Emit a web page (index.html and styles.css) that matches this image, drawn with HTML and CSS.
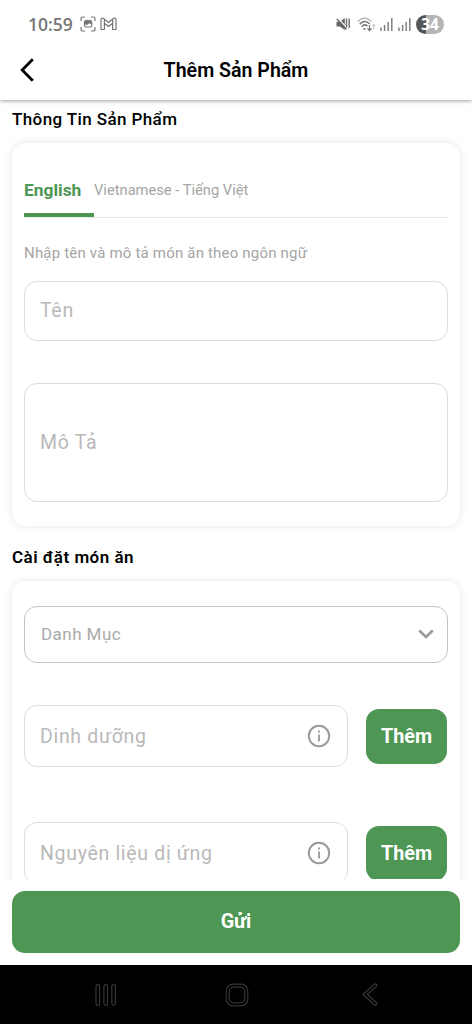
FILE: index.html
```html
<!DOCTYPE html>
<html lang="vi">
<head>
<meta charset="utf-8">
<title>Thêm Sản Phẩm</title>
<link rel="stylesheet" href="styles.css">
</head>
<body>
<div class="screen">
  <header class="header">
    <div class="status">
      <div class="status-left">
        <span class="clock">10:59</span>
        <svg class="ic-capture" width="16" height="16" viewBox="0 0 16 16" fill="none" stroke="#777" stroke-width="1.2" stroke-linecap="round">
          <path d="M1 4.500V3Q1 1 3 1h1.500M11.500 1H13q2 0 2 2v1.500M15 11.500V13q0 2-2 2h-1.500M4.500 15H3q-2 0-2-2v-1.500"/>
          <rect x="4.500" y="4.600" width="7.200" height="6.400" rx="1.500"/>
          <path d="M4.500 8.200V6q0-1.500 1.500-1.500h4.200q1.500 0 1.500 1.500v2.500L9.500 7.200 7 9z" fill="#777" stroke="none"/>
        </svg>
        <svg class="ic-mail" width="17" height="14" viewBox="0 0 17 14" fill="none" stroke="#777" stroke-width="1.2" stroke-linejoin="round">
          <path d="M1 12.500V2.500Q1.300.5 3.300 1.300L8.500 5.500 13.700 1.300Q15.700.5 16 2.500V12.500H12.600V6.300L8.500 9.500 4.400 6.300V12.500Z"/>
          <path d="M4.400 6.300V2.200M12.600 6.300V2.200"/>
        </svg>
      </div>
      <div class="status-right">
        <svg class="ic-mute" width="14" height="14" viewBox="0 0 14 14" fill="none" stroke="#666" stroke-width="1.200">
          <path d="M.5 4.700H4L8.800 1V13L4 9.500H.5Z" fill="#666" stroke="none"/>
          <path d="M2 1.200 11 11" stroke="#fff" stroke-width="1.200"/>
          <path d="M.8 2 10.500 12.500"/>
          <path d="M10 1.500l1 1.500-1 1.500 1 1.500-1 1.500 1 1.500-1 1.500M12.700 1.500l1 1.500-1 1.500 1 1.500-1 1.500 1 1.500-1 2"/>
        </svg>
        <svg class="ic-wifi" width="19" height="15" viewBox="0 0 19 15" fill="none" stroke-width="1.500">
          <path d="M.8 4.500Q7.500-2.200 14.500 4.500" stroke="#bbb"/>
          <path d="M2.600 7.200Q7.500 2 12.800 7" stroke="#777"/>
          <path d="M4.800 9.700Q7.500 6.500 10.500 9" stroke="#777"/>
          <circle cx="7.500" cy="12" r="1.100" fill="#777"/>
          <path d="M12.500 8v5M10.500 11.300l2 2.200 2-2.200" stroke="#777" stroke-width="1.200"/>
          <path d="M16.800 12V7.500M15.300 9l1.500-1.700L18.300 9" stroke="#bbb" stroke-width="1"/>
        </svg>
        <svg class="ic-signal" width="13" height="13" viewBox="0 0 13 13" stroke="#808080" stroke-width="1.500">
          <path d="M1 9.500V13M4.600 7V13M8.200 4V13M11.800 0V13"/>
        </svg>
        <svg class="ic-signal second" width="13" height="13" viewBox="0 0 13 13" stroke="#808080" stroke-width="1.500">
          <path d="M1 9.500V13M4.600 7V13M8.200 4V13M11.800 0V13"/>
        </svg>
        <span class="battery">34</span>
      </div>
    </div>
    <div class="appbar">
      <svg class="back" width="14" height="24" viewBox="0 0 14 24" fill="none" stroke="#000" stroke-width="2.800">
        <path d="M12.800 1.200 2.200 12 12.800 22.800"/>
      </svg>
      <h1 class="title">Thêm Sản Phẩm</h1>
    </div>
  </header>

  <main class="content">
    <h2 class="section first">Thông Tin Sản Phẩm</h2>
    <section class="card info">
      <div class="tabs">
        <div class="tab active"><span>English</span></div>
        <div class="tab other"><span>Vietnamese - Tiếng Việt</span></div>
      </div>
      <p class="hint">Nhập tên và mô tả món ăn theo ngôn ngữ</p>
      <div class="field name"><span>Tên</span></div>
      <div class="field desc"><span>Mô Tả</span></div>
    </section>

    <h2 class="section second">Cài đặt món ăn</h2>
    <section class="card settings">
      <div class="field select">
        <span>Danh Mục</span>
        <svg width="16" height="10" viewBox="0 0 16 10" fill="none" stroke="#999" stroke-width="2.600"><path d="M1.300 1.500 8 8l6.700-6.500"/></svg>
      </div>
      <div class="row">
        <div class="field add"><span>Dinh dưỡng</span>
          <svg width="24" height="24" viewBox="0 0 24 24"><circle cx="12" cy="12" r="10.200" fill="none" stroke="#999" stroke-width="1.900"/><path d="M11.100 10.500h1.800v7h-1.800zM11.100 6.500h1.800v2h-1.800z" fill="#999"/></svg>
        </div>
        <div class="btn small"><span>Thêm</span></div>
      </div>
      <div class="row">
        <div class="field add"><span>Nguyên liệu dị ứng</span>
          <svg width="24" height="24" viewBox="0 0 24 24"><circle cx="12" cy="12" r="10.200" fill="none" stroke="#999" stroke-width="1.900"/><path d="M11.100 10.500h1.800v7h-1.800zM11.100 6.500h1.800v2h-1.800z" fill="#999"/></svg>
        </div>
        <div class="btn small"><span>Thêm</span></div>
      </div>
    </section>
  </main>

  <footer class="footer"><div class="btn submit"><span>Gửi</span></div></footer>

  <nav class="navbar">
    <svg class="nav-recent" width="22" height="22" viewBox="0 0 22 22" fill="none" stroke="#353535" stroke-width="1.200">
      <rect x="1" y=".7" width="3.600" height="20.600" rx="1.800"/><rect x="8.900" y=".7" width="3.600" height="20.600" rx="1.800"/><rect x="16.800" y=".7" width="3.600" height="20.600" rx="1.800"/>
    </svg>
    <svg class="nav-home" width="24" height="24" viewBox="0 0 24 24" fill="none" stroke="#353535" stroke-width="1.200">
      <rect x="1.200" y="1.200" width="21.600" height="21.600" rx="7"/><rect x="4.200" y="4.200" width="15.600" height="15.600" rx="4.500"/>
    </svg>
    <svg class="nav-back" width="16" height="23" viewBox="0 0 16 23" fill="none" stroke="#353535" stroke-width="1.200" stroke-linejoin="round">
      <path d="M12.300 1.200 1 11.500 12.300 21.800Q14.500 22.700 15 20.200L5.500 11.500 15 2.800Q14.500.3 12.300 1.200Z"/>
    </svg>
  </nav>
</div>
</body>
</html>
```
FILE: styles.css
```css
* { box-sizing: border-box; }
body {
  margin: 0;
  font-family: Roboto, "Noto Sans", sans-serif;
  background: #fff;
  color: #000;
}
h1, h2, p { margin: 0; }
span { white-space: nowrap; }
svg { flex: none; display: block; }

.screen {
  width: 472px;
  height: 1024px;
  display: flex;
  flex-direction: column;
  overflow: hidden;
}
.header {
  height: 100px;
  flex: none;
  background: #fff;
  box-shadow: 0 1px 4px rgba(0, 0, 0, .38);
  z-index: 1;
}
.status {
  height: 48px;
  display: flex;
  justify-content: space-between;
  padding: 0 28px;
}
.status-left, .status-right { display: flex; align-items: center; }
.clock {
  width: 52px;
  font: 600 17.500px/20px "Open Sans", sans-serif;
  color: #777;
  padding-bottom: 1px;
}
.ic-mail { margin-left: 4px; }
.ic-wifi { margin-left: 7px; }
.ic-signal { margin-left: 4px; }
.ic-signal.second { margin-left: 5px; }
.battery {
  margin-left: 5px;
  width: 28px;
  height: 19px;
  border-radius: 10px;
  background: linear-gradient(90deg, #555 36%, #b5b5b5 36%);
  color: #fff;
  text-align: center;
  font: 700 15.500px/19px "Open Sans", sans-serif;
}
.appbar {
  height: 44px;
  display: grid;
  grid-template-columns: 20px 1fr 20px;
  align-items: center;
  padding: 0 20px;
}
.title {
  padding-top: 1px;
  font-size: 19.600px;
  font-weight: 600;
  line-height: 24px;
  text-align: center;
}

.content {
  height: 779px;
  flex: none;
  overflow: hidden;
  padding: 0 12px;
}
.section {
  font-size: 17px;
  line-height: 20px;
}
.section.first { font-weight: 500; padding-top: 9px; letter-spacing: .400px; }
.section.second { font-weight: 600; padding-top: 21px; letter-spacing: .480px; }
.card {
  border-radius: 14px;
  background: #fff;
  box-shadow: 0 0 8px rgba(0, 0, 0, .11);
  padding: 0 12px;
}
.info { height: 383px; margin-top: 14px; padding-top: 25px; }
.settings { height: 330px; margin-top: 14px; padding-top: 25px; }
.tabs {
  display: flex;
  height: 50px;
  border-bottom: 1px solid #e9e9e9;
}
.tab { height: 49px; line-height: 45px; }
.active {
  width: 70px;
  border-bottom: 4px solid #4e9653;
  color: #4e9653;
  font-size: 17.400px;
  font-weight: 700;
}
.other { color: #a5a5a5; font-size: 14.700px; }
.hint {
  margin-top: 24px;
  line-height: 22px;
  font-size: 15px;
  letter-spacing: .190px;
  color: #a5a5a5;
}
.field {
  display: flex;
  align-items: center;
  justify-content: space-between;
  border: 1px solid #dcdcdc;
  border-radius: 13px;
  padding: 0 15px;
  font-size: 19.500px;
  letter-spacing: .680px;
  color: #b9b9b9;
}
.name { height: 60px; margin-top: 17px; padding-bottom: 1px; }
.desc { height: 119px; margin-top: 42px; }
.select {
  height: 57px;
  border-color: #c4c4c4;
  font-size: 17px;
  letter-spacing: .450px;
  color: #aaa;
  padding: 0 13px 1px 16px;
}
.row { display: flex; align-items: center; gap: 18px; margin-top: 42px; }
.row + .row { margin-top: 55px; }
.add { width: 324px; height: 62px; padding-right: 16px; }
.btn {
  display: flex;
  align-items: center;
  justify-content: center;
  border-radius: 13px;
  background: #4e9653;
  color: #fff;
  font-size: 19.800px;
  font-weight: 700;
}
.small { width: 81px; height: 55px; margin-top: 1px; }
.footer { height: 86px; flex: none; padding: 12px 12px 0; }
.submit { height: 62px; padding-bottom: 1px; }
.navbar {
  height: 59px;
  flex: none;
  background: #000;
  display: flex;
  justify-content: space-between;
  align-items: center;
  padding: 0 94px 0 95px;
}
.nav-home { margin-right: 5px; }
```
